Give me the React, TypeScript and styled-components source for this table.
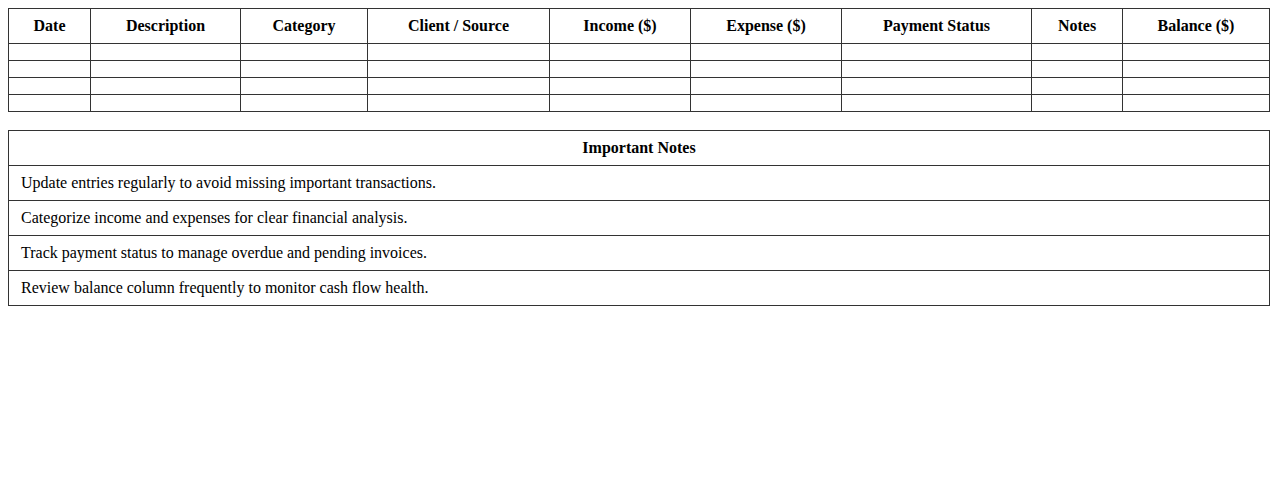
import styled, { createGlobalStyle } from "styled-components";

const GlobalStyle = createGlobalStyle`
  body {
    margin: 8px;
    background: #ffffff;
    font-family: "Liberation Serif", "Times New Roman", serif;
    color: #000000;
  }
`;

const Sheet = styled.table`
  width: 100%;
  border-collapse: collapse;
  table-layout: fixed;
  font-size: 16px;
  margin-bottom: 18px;
`;

const HeadCell = styled.th`
  border: 1px solid #333333;
  padding: 8px 12px;
  font-weight: bold;
  text-align: center;
  line-height: 18px;
`;

const Cell = styled.td<{ $align?: "left" | "center" }>`
  border: 1px solid #333333;
  padding: 8px 12px;
  text-align: ${({ $align }) => $align ?? "left"};
  line-height: 18px;
`;

const columns: { title: string; width: number }[] = [
  { title: "Date", width: 82 },
  { title: "Description", width: 150 },
  { title: "Category", width: 127 },
  { title: "Client / Source", width: 182 },
  { title: "Income ($)", width: 141 },
  { title: "Expense ($)", width: 151 },
  { title: "Payment Status", width: 190 },
  { title: "Notes", width: 91 },
  { title: "Balance ($)", width: 147 },
];

const notes = [
  "Update entries regularly to avoid missing important transactions.",
  "Categorize income and expenses for clear financial analysis.",
  "Track payment status to manage overdue and pending invoices.",
  "Review balance column frequently to monitor cash flow health.",
];

export default function App() {
  return (
    <>
      <GlobalStyle />
      <Sheet>
        <colgroup>
          {columns.map((c) => (
            <col key={c.title} style={{ width: c.width }} />
          ))}
        </colgroup>
        <thead>
          <tr>
            {columns.map((c) => (
              <HeadCell key={c.title}>{c.title}</HeadCell>
            ))}
          </tr>
        </thead>
        <tbody>
          {[0, 1, 2, 3].map((row) => (
            <tr key={row}>
              {columns.map((c) => (
                <Cell key={c.title}></Cell>
              ))}
            </tr>
          ))}
        </tbody>
      </Sheet>
      <Sheet>
        <thead>
          <tr>
            <HeadCell>Important Notes</HeadCell>
          </tr>
        </thead>
        <tbody>
          {notes.map((n) => (
            <tr key={n}>
              <Cell>{n}</Cell>
            </tr>
          ))}
        </tbody>
      </Sheet>
    </>
  );
}
